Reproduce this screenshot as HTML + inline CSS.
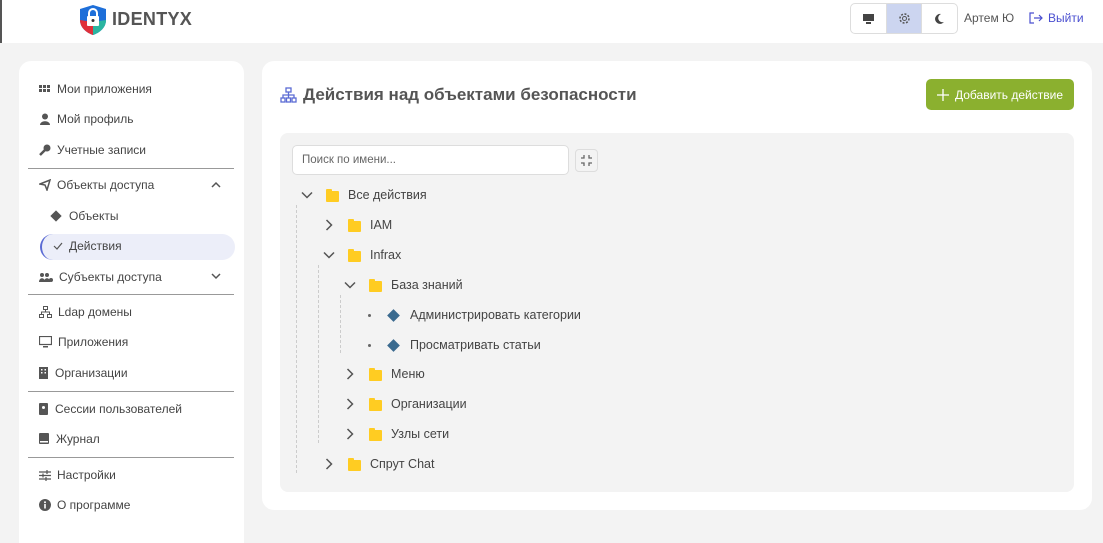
<!DOCTYPE html>
<html><head><meta charset="utf-8"><style>
*{box-sizing:border-box;margin:0;padding:0}
html,body{width:1103px;height:543px;overflow:hidden}
body{background:#f3f3f3;font-family:"Liberation Sans",sans-serif;color:#444;position:relative;font-size:13px}
.top{position:absolute;left:0;top:0;width:1103px;height:43px;background:#fff;border-left:2px solid #555}
.logo{position:absolute;left:76px;top:4px}
.logot{position:absolute;left:110px;top:9px;font-weight:bold;font-size:18px;color:#555;letter-spacing:0.3px}
.tg{position:absolute;left:848px;top:3px;width:108px;height:31px;border:1px solid #ddd;border-radius:5px;overflow:hidden;display:flex}
.tg div{width:36px;height:100%;display:flex;align-items:center;justify-content:center}
.user{position:absolute;left:962px;top:11px;font-size:12px;color:#555}
.exit{position:absolute;left:1027px;top:11px;font-size:12px;color:#4a4fd0;display:flex;gap:5px;align-items:center}
.side{position:absolute;left:19px;top:61px;width:225px;height:482px;background:#fff;border-radius:12px 12px 0 0}
.it{position:absolute;left:20px;font-size:12px;color:#444;display:flex;align-items:center;gap:6px;height:14px}
.hr{position:absolute;left:9px;width:206px;height:1px;background:#999}
.main{position:absolute;left:262px;top:61px;width:830px;height:449px;background:#fff;border-radius:12px}
h1{position:absolute;left:41px;top:24px;font-size:17px;font-weight:bold;color:#555}
.btn{position:absolute;left:664px;top:18px;width:148px;height:31px;background:#8bb02f;border-radius:5px;color:#fff;font-size:12px;display:flex;align-items:center;justify-content:center;gap:6px}
.panel{position:absolute;left:18px;top:72px;width:794px;height:359px;background:#f3f3f3;border-radius:8px}
.search{position:absolute;left:12px;top:12px;width:277px;height:30px;background:#fff;border:1px solid #ddd;border-radius:5px;font-size:11.5px;color:#666;padding:8px 9px}
.cb{position:absolute;left:295px;top:16px;width:23px;height:23px;border:1px solid #ddd;border-radius:4px;background:#f3f3f3;display:flex;align-items:center;justify-content:center}
.row{position:absolute;display:flex;align-items:center;font-size:12.5px;color:#444;height:20px}
.chev{width:14px;height:14px;margin-right:12px}
.fold{width:13px;height:11px;background:#ffcc22;border-radius:1px;margin-right:9px;position:relative;top:1px}
.fold:before{content:"";position:absolute;left:0;top:-2px;width:6px;height:3px;background:#ffcc22;border-radius:1px 1px 0 0}
.dia{width:9px;height:9px;background:#3a6a8f;transform:rotate(45deg);margin-right:12px}
.dot{width:3px;height:3px;background:#666;border-radius:50%;margin-right:18px}
.vl{position:absolute;border-left:1px dashed #ccc;width:0}
svg{display:block}
</style></head><body>
<div class="top">
 <svg class="logo" width="30" height="32" viewBox="0 0 30 32"><path d="M15 1 L28 5 V16 C28 24 21 29 15 31 C9 29 2 24 2 16 V5Z" fill="#1e6fd9"/><path d="M2 16 C2 24 9 29 15 31 L15 18 Z" fill="#e0303a"/><path d="M28 16 C28 24 21 29 15 31 L15 18Z" fill="#2bb5a0"/><rect x="9" y="12" width="12" height="10" rx="1" fill="#fff"/><path d="M11 12 V9 a4 4 0 0 1 8 0 V12" stroke="#fff" stroke-width="2" fill="none"/><circle cx="15" cy="16.5" r="1.5" fill="#333"/></svg>
 <div class="logot">IDENTYX</div>
 <div class="tg"><div><svg width="13" height="12"><rect x="1" y="1" width="11" height="7" fill="#444"/><rect x="4" y="9" width="5" height="2" fill="#444"/></svg></div><div style="background:#ccd5f0;border-left:1px solid #ddd;border-right:1px solid #ddd"><svg width="13" height="13" viewBox="0 0 13 13"><circle cx="6.5" cy="6.5" r="4.5" fill="none" stroke="#555" stroke-width="1.5" stroke-dasharray="2 1.5"/><circle cx="6.5" cy="6.5" r="2" fill="none" stroke="#555"/></svg></div><div><svg width="12" height="12"><path d="M8 1 A5 5 0 1 0 11 9 A4 4 0 0 1 8 1Z" fill="#444"/></svg></div></div>
 <div class="user">Артем Ю</div>
 <div class="exit"><svg width="14" height="12" viewBox="0 0 14 12"><path d="M5 1H1V11H5M5 6H13M10 3L13 6L10 9" stroke="#4a4fd0" stroke-width="1.2" fill="none"/></svg>Выйти</div>
</div>
<div class="side">
 <div class="it" style="top:21px"><svg width="12" height="8"><g fill="#555"><rect x="0" y="0" width="3" height="3"/><rect x="4" y="0" width="3" height="3"/><rect x="8" y="0" width="3" height="3"/><rect x="0" y="4" width="3" height="3"/><rect x="4" y="4" width="3" height="3"/><rect x="8" y="4" width="3" height="3"/></g></svg>Мои приложения</div>
 <div class="it" style="top:51px"><svg width="12" height="12"><circle cx="6" cy="3.5" r="3" fill="#555"/><path d="M1 12 C1 7 11 7 11 12Z" fill="#555"/></svg>Мой профиль</div>
 <div class="it" style="top:82px"><svg width="12" height="12"><circle cx="8" cy="4" r="3.5" fill="#555"/><path d="M6 6 L1 11" stroke="#555" stroke-width="2.5"/></svg>Учетные записи</div>
 <div class="hr" style="top:107px"></div>
 <div class="it" style="top:117px"><svg width="12" height="12"><path d="M1 5 L11 1 L8 11 L6 6Z" fill="none" stroke="#555" stroke-width="1.5"/></svg>Объекты доступа</div>
 <svg style="position:absolute;left:192px;top:120px" width="10" height="7"><path d="M1 6L5 2L9 6" stroke="#555" stroke-width="1.5" fill="none"/></svg>
 <div class="it" style="top:148px;left:33px"><span class="dia" style="background:#555;width:8px;height:8px;margin-right:3px"></span>Объекты</div>
 <div style="position:absolute;left:21px;top:173px;width:195px;height:26px;background:#eceef9;border-radius:13px;border-left:2px solid #5b6bd4"></div>
 <div class="it" style="top:178px;left:34px"><svg width="10" height="8"><path d="M1 4L4 7L9 1" stroke="#555" stroke-width="1.2" fill="none"/></svg>Действия</div>
 <div class="it" style="top:209px"><svg width="14" height="11"><g fill="#555"><circle cx="3" cy="3" r="2"/><circle cx="8" cy="3" r="2"/><path d="M0 10C0 5 6 5 6 10Z"/><path d="M5 10C5 5 11 5 11 10Z"/><circle cx="12" cy="8" r="2"/></g></svg>Субъекты доступа</div>
 <svg style="position:absolute;left:192px;top:212px" width="10" height="7"><path d="M1 1L5 5L9 1" stroke="#555" stroke-width="1.5" fill="none"/></svg>
 <div class="hr" style="top:233px"></div>
 <div class="it" style="top:244px"><svg width="13" height="12"><g fill="none" stroke="#555"><rect x="4.5" y="0.5" width="4" height="3"/><rect x="0.5" y="8.5" width="4" height="3"/><rect x="8.5" y="8.5" width="4" height="3"/><path d="M6.5 3.5V6M2.5 8.5V6H10.5V8.5"/></g></svg>Ldap домены</div>
 <div class="it" style="top:274px"><svg width="13" height="12"><rect x="0.5" y="0.5" width="12" height="8" fill="none" stroke="#555" stroke-width="1.2"/><rect x="4" y="10" width="5" height="1.5" fill="#555"/></svg>Приложения</div>
 <div class="it" style="top:305px"><svg width="10" height="12"><rect width="9" height="12" fill="#555"/><g fill="#fff"><rect x="2" y="2" width="1.5" height="1.5"/><rect x="5.5" y="2" width="1.5" height="1.5"/><rect x="2" y="5" width="1.5" height="1.5"/><rect x="5.5" y="5" width="1.5" height="1.5"/></g></svg>Организации</div>
 <div class="hr" style="top:330px"></div>
 <div class="it" style="top:341px"><svg width="10" height="12"><rect width="9" height="12" rx="1" fill="#555"/><circle cx="4.5" cy="4.5" r="1.5" fill="#fff"/></svg>Сессии пользователей</div>
 <div class="it" style="top:371px"><svg width="11" height="12"><rect width="10" height="11" rx="1" fill="#555"/><rect x="1" y="8" width="8" height="1.5" fill="#fff"/></svg>Журнал</div>
 <div class="hr" style="top:396px"></div>
 <div class="it" style="top:407px"><svg width="12" height="11"><g stroke="#555" stroke-width="1.2"><path d="M0 2H12M0 5.5H12M0 9H12"/><path d="M8 0V4M4 3.5V7.5M7 7V11"/></g></svg>Настройки</div>
 <div class="it" style="top:437px"><svg width="12" height="12"><circle cx="6" cy="6" r="6" fill="#555"/><rect x="5.2" y="5" width="1.6" height="4.5" fill="#fff"/><circle cx="6" cy="3.2" r="1" fill="#fff"/></svg>О программе</div>
</div>
<div class="main">
 <svg style="position:absolute;left:18px;top:26px" width="17" height="16" viewBox="0 0 17 16"><g fill="none" stroke="#5b6bd4" stroke-width="1.3"><rect x="6" y="1" width="5" height="4"/><rect x="1" y="11" width="4" height="4"/><rect x="6.5" y="11" width="4" height="4"/><rect x="12" y="11" width="4" height="4"/><path d="M8.5 5V11M3 11V8H14V11"/></g></svg>
 <h1>Действия над объектами безопасности</h1>
 <div class="btn"><svg width="12" height="12"><path d="M6 0V12M0 6H12" stroke="#fff" stroke-width="1.3"/></svg>Добавить действие</div>
 <div class="panel">
  <div class="search">Поиск по имени...</div>
  <div class="cb"><svg width="11" height="11"><g stroke="#666" stroke-width="1.3" fill="none"><path d="M3 0V3H0M8 0V3H11M3 11V8H0M8 11V8H11"/></g></svg></div>
  <div class="vl" style="left:16px;top:72px;height:268px"></div>
  <div class="vl" style="left:38px;top:132px;height:178px"></div>
  <div class="vl" style="left:60px;top:162px;height:58px"></div>
  <div class="row" style="left:20px;top:52px"><svg class="chev" viewBox="0 0 14 14"><path d="M2 4.5L7 9.5L12 4.5" stroke="#555" stroke-width="1.5" fill="none"/></svg><span class="fold"></span>Все действия</div>
  <div class="row" style="left:42px;top:82px"><svg class="chev" viewBox="0 0 14 14"><path d="M4.5 2L9.5 7L4.5 12" stroke="#555" stroke-width="1.5" fill="none"/></svg><span class="fold"></span>IAM</div>
  <div class="row" style="left:42px;top:112px"><svg class="chev" viewBox="0 0 14 14"><path d="M2 4.5L7 9.5L12 4.5" stroke="#555" stroke-width="1.5" fill="none"/></svg><span class="fold"></span>Infrax</div>
  <div class="row" style="left:63px;top:142px"><svg class="chev" viewBox="0 0 14 14"><path d="M2 4.5L7 9.5L12 4.5" stroke="#555" stroke-width="1.5" fill="none"/></svg><span class="fold"></span>База знаний</div>
  <div class="row" style="left:88px;top:172px"><span class="dot"></span><span class="dia"></span>Администрировать категории</div>
  <div class="row" style="left:88px;top:202px"><span class="dot"></span><span class="dia"></span>Просматривать статьи</div>
  <div class="row" style="left:63px;top:231px"><svg class="chev" viewBox="0 0 14 14"><path d="M4.5 2L9.5 7L4.5 12" stroke="#555" stroke-width="1.5" fill="none"/></svg><span class="fold"></span>Меню</div>
  <div class="row" style="left:63px;top:261px"><svg class="chev" viewBox="0 0 14 14"><path d="M4.5 2L9.5 7L4.5 12" stroke="#555" stroke-width="1.5" fill="none"/></svg><span class="fold"></span>Организации</div>
  <div class="row" style="left:63px;top:291px"><svg class="chev" viewBox="0 0 14 14"><path d="M4.5 2L9.5 7L4.5 12" stroke="#555" stroke-width="1.5" fill="none"/></svg><span class="fold"></span>Узлы сети</div>
  <div class="row" style="left:42px;top:321px"><svg class="chev" viewBox="0 0 14 14"><path d="M4.5 2L9.5 7L4.5 12" stroke="#555" stroke-width="1.5" fill="none"/></svg><span class="fold"></span>Спрут Chat</div>
 </div>
</div>
</body></html>
